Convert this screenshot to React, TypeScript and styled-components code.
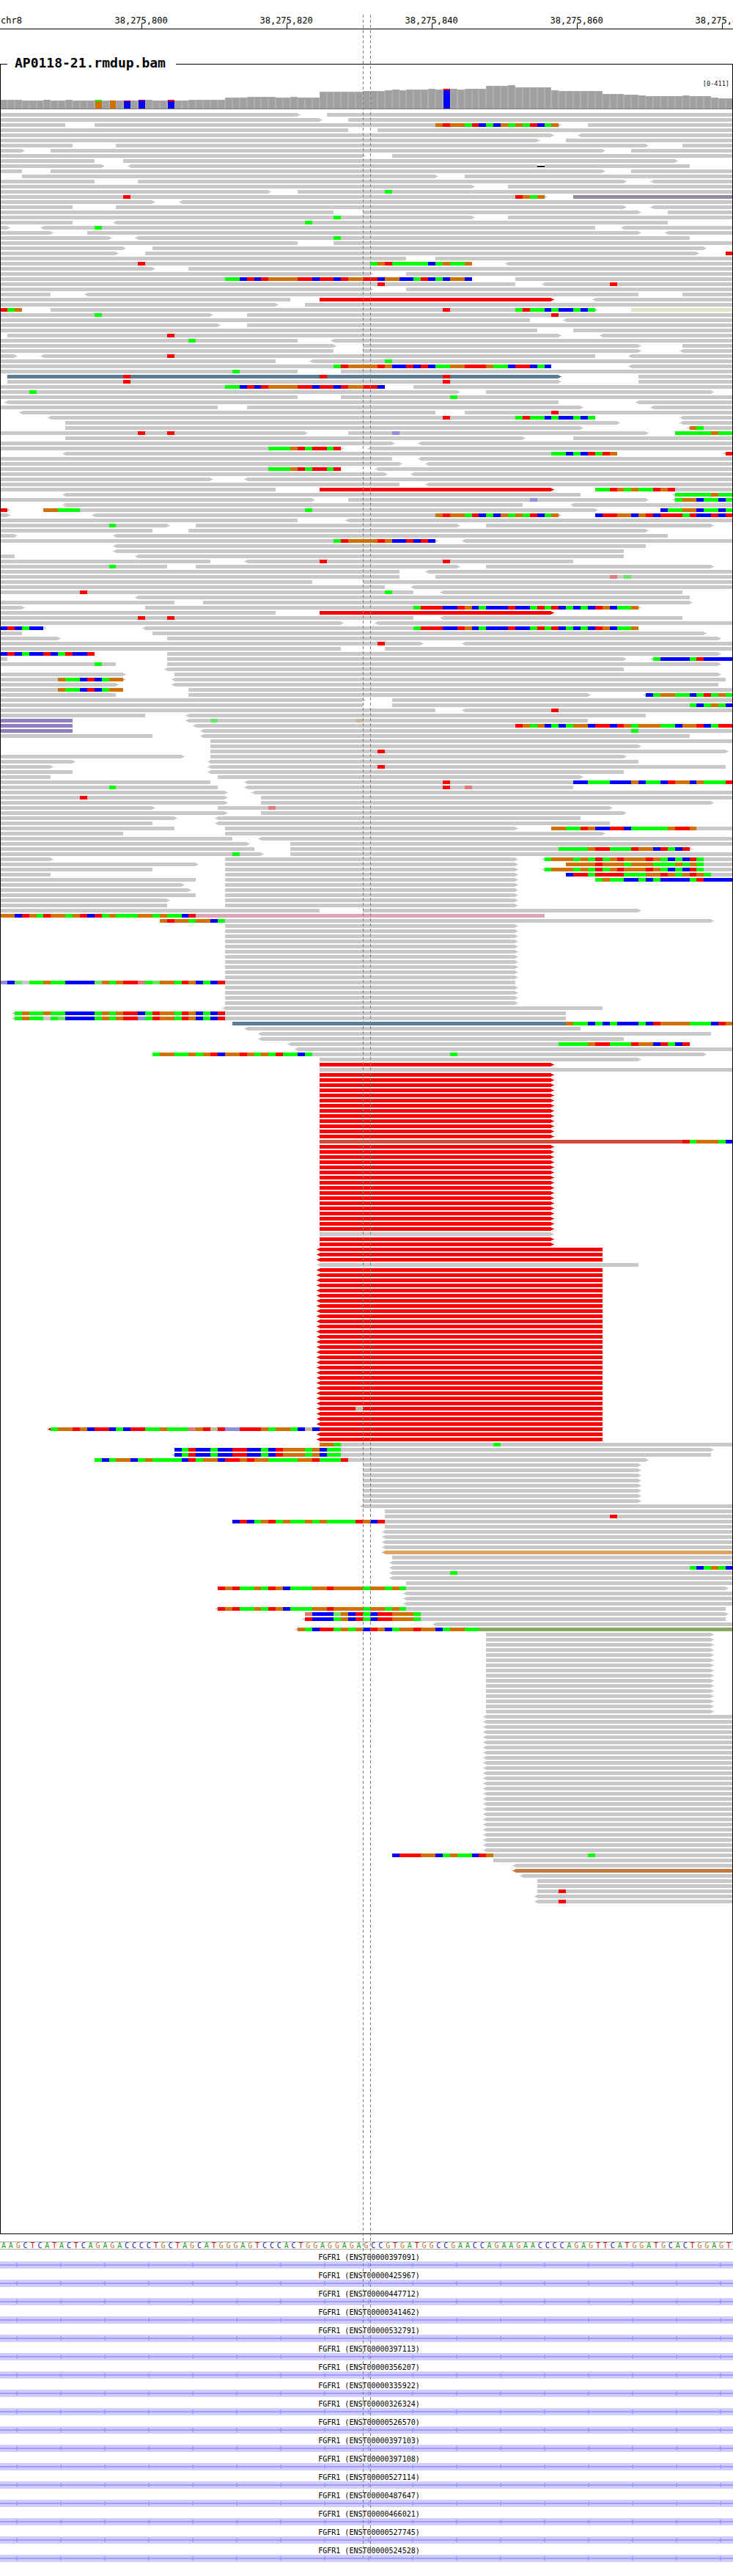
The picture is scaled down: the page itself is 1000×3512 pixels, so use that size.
import React from "react";
import styled, { createGlobalStyle } from "styled-components";

const BASE = 9.9;
const READ_H = 5;
const ROW_PITCH = 7;

const rep = (n: number, s: string) => Array.from({ length: n }, () => s);

const L96 = "@57:ATTTCCTGCACCCTCCATATCACACTGCAAG";
const L106 = "@90:ACCCCATCCCC";
const LA = "@75:AGGGAGATAGTGGGTGACACTA";
const LR = "@30:TGTAAGATGCAAAGGTGGGGAGGAGA";

const ROWS: string[] = [
  "0-41> 45-101",
  "0-44> 48-101",
  "0-9 13-77> @60:GTGGATCACGAGATCAG 81-101",
  "0-48 52-101",
  "0-76> <80-101",
  "0-74> 78-101",
  "0-10 16-89> 94-101",
  "0-3> 7-83> 87-101",
  "0-50> 54-101",
  "0-13 17-93>",
  "0-14> <18-74 #74 75-95",
  "0-3 7-83> 87-101",
  "3-60> 64-101",
  "0-13 19-86> <90-101",
  "0-65> 70-101",
  "0-37> 41-101 @53:A",
  "0-75> @17:T @71:TGAG 79-101m",
  "0-21> <25-101",
  "0-10 16-86> <90-101",
  "0-46 50-88> 92-101",
  "0-65> @46:A 70-101",
  // 21
  "0-10 <16-92 @42:A",
  "0-1> <6-82 @13:A <86-101",
  "0-7> 12-88> <92-101",
  "0-15> <19-95 @46:A",
  "0-41 46-101",
  "0-17> 21-97>",
  "0-16> 20-96> 100-101 @100:T",
  "0-56 60-101",
  "0-65 @19:T @51:AGTAAAAACAGAAG <70-101",
  "0-21> 26-101",
  "0-51> 56-101",
  "0-65 @31:AACTCTGGGGTTCTTCTGGTTCGGCCATCACGGC 71-101",
  "0-71 @52:T <75-101 @84:T",
  "0-51> 56-101",
  "0-7 <12-88 94-101",
  "0-40 44-76>r <82-101",
  "0-38> 42-101",
  "0-3 @0:TAG 7-82> @61:T @71:ATAACACCACA 87-101y",
  "0-29> @13:A 34-101 @76:T",
  "0-73 <78-101",
  "0-30> 34-101",
  "0-74 79-101",
  "1-77> @23:T <83-101",
  "0-41 @26:A <46-101",
  "0-46> 50-88> 94-101",
  "0-46 50-88> <94-101",
  "0-2> <6-82 @23:T <87-101",
  "0-38 <43-101 @53:A",
  "0-76 @46:ATGGGGTGCCTCTCAAGGTTTGAACTTCAC <87-101",
  "0-41 @32:A 47-101",
  "1-77>s @17:T @44:T @61:T 88-101",
  "1-77> @17:T @61:T 88-101",
  "0-53 @31:AACTCTGGGGTTCTTCTGGTTC 57-101",
  "0-63> @4:A 67-98>",
  "0-41 47-101 @62:A",
  "<1-77 <88-101",
  "0-30 34-80> <90-101",
  "<3-60 64-101 @76:T",
  "<7-82 @61:T @71:ATAACACCACA <94-101",
  "9-85> <94-101",
  "9-80> <95-101 @95:GA",
  "0-42> @19:T @23:T 48-89> @54:c 93-101 @93:AAAAAGAA",
  "9-72> 79-101",
  "0-54> <58-101",
  "0-47> @37:AAAGTATTAT <51-101",
  "<9-85 @76:AACACTATG <100-101 @100:T",
  "0-54 <58-101",
  "0-55> <59-101",
  "0-47 @37:AAAGTATTAT <52-101",
  "0-53> <57-101",
  "0-29> <34-101",
  "0-55 <59-101",
  "0-38 44-76>r 82-101 @82:AATGAGAATGT",
  "<9-80 <93-101 @93:AAAAAGAA",
  "0-43> 48-89> @73:c <93-101 @93:AGGCAACA",
  "<9-72 <79-101",
  "0-1> @0:T 6-82> @6:GGAAA @42:A 91-101 @91:CAAGGCAACA",
  "0-1> <13-77> @60:GTGGATCACGAGATCAG 82-101 @82:CTTGGCGTCTTTATCCTCT",
  "0-41 <48-101",
  "0-23> @15:A 27-63> 67-98>",
  "0-21 26-89>",
  "0-2> <16-92",
  "0-60> @46:ATGGGGTGCCTCTC <64-101",
  "<16-89",
  // 85
  "<16-86",
  "0-2 <19-86",
  "0-29 <34-79 @44:T @61:T",
  "0-23 @15:A 27-63> 67-98>",
  "0-55 <59-101",
  "0-55 60-101 @84:t @86:a",
  "0-43 50-101",
  "0-53 <57-101",
  "0-57 @11:T @53:A <61-94",
  "<19-95",
  "0-24 28-95>",
  `0-3> 20-88> ${L96}`,
  "0-38 44-76>r",
  "0-57 @19:T @23:T <61-94",
  "0-47> <52-101",
  `0-6> @0:CTCACC <20-88 ${L96}`,
  "0-3 21-97>",
  "0-8> 23-99>",
  "0-58> @52:T <64-101",
  "0-47 53-101",
  "0-13 @0:CTCACCTCATCCT 23-99>",
  `0-1 23-86> <90-101 ${L106}`,
  "0-16 @13:A 23-99>",
  "<23-86",
  "0-17> 24-99>",
  "0-17> @8:GAACTCAGG <24-100",
  "0-16> <24-99",
  "0-17 @8:GAACTCAGG 26-101",
  "0-16 26-81> <89-101 @89:CAGGAACATAGA",
  "0-50> 54-101",
  "0-50 54-101 @95:ACAGAC",
  "0-60 <64-101 @76:T",
  "0-20 <26-89",
  "0-10v <26-81 @29:a @49:n",
  "0-10v <27-101 @71:TGAGCACAGGCTTCTGAGGGAACGGTCATT",
  "0-10v <28-101 @87:A",
  "0-21 <28-95",
  "29-101",
  "29-88>",
  "29-100> @52:T",
  "0-25> 29-86>",
  "0-10> <29-88",
  "0-7> <29-100 @52:T",
  "0-10 <29-86",
  "0-7 30-80>",
  "0-29 <34-79 @61:T 79-101 @79:CCAAACCCGCAACTGGCGAAAT",
  "0-30 @15:A <34-79 @61:T @64:t",
  "0-31> <35-101",
  "0-31> @11:T 36-101",
  "0-31> 36-98>",
  "0-21> 30-84> @37:t",
  "0-31> 36-86>",
  "0-24> <30-80",
  "0-21 <30-84",
  "0-24 31-71> 76-101 @76:GGAATGCCTTCAAAAAGTTG",
  "0-17 31-83>",
  "0-32 <36-101",
  "0-34> 40-101",
  "0-35 40-95> @77:AAAAGTTAAATGGCTACT",
  "0-36> @32:A 40-101",
  `0-7> 31-71> <75-101 ${LA}`,
  "0-27> 31-71> 78-101 @78:GGGGTGGGAGGGAAAGAGA",
  `0-21 31-71> <75-101 ${LA}`,
  "0-7 31-71> 78-101 @78:CTTATTTTAAAGGTGAGTGA",
  "0-27 31-71> 82-101 @82:AGAACCACACCCCATCCCC",
  "0-25> 31-71>",
  "0-26> 31-71>",
  "0-27 31-71>",
  "0-23> 31-71>",
  "0-23 31-71>",
  "0-44 50-88>",
  "0-75p @0:GGCTGATGGAGTCTAGAAAGGAGAACT",
  "22-98> @22:GTGGAGGCA",
  ...rep(11, "31-71>"),
  "0-71 @0:cCa.AAGAACCCCaGAGTTtAaGGATGCACT",
  ...rep(4, "31-71>"),
  "<31-83",
  "<2-78 @2:AGAAGAACCCCAGAGTTCATGGATGCACT",
  "<2-78 @2:AGAA.AaCCCCAGAGTTcATGGATGCACT",
  "32-78s 78-101 @78:GAACACACCCACTGGGGAAACTG",
  "<34-80",
  "<36-98",
  "<36-86",
  "<40-95 @77:AAAAGTTAAATGGCTACT",
  "<41-101",
  "21-97> @21:AGGAAGAGTCGGTGAGATAACA @62:A",
  "44-88>",
  "44-76>r",
  "44-101",
  ...rep(13, "44-76>r"),
  "44-94u @94:TAGGGAC",
  ...rep(17, "44-76>r"),
  "44-76>",
  ...rep(2, "44-76>r"),
  ...rep(3, "<44-83r"),
  "<44-88",
  ...rep(27, "<44-83r"),
  "<44-83r @49:n",
  ...rep(3, "<44-83r"),
  "<7-83r @7:AGGTGCTTCACTTAAGAAAtGTnTccTTTGAGGACnC",
  ...rep(2, "<44-83r"),
  "44-101 @44:GGA @68:A",
  "24-98> @24:CATCCACCTTCCACTGGGAGCAA",
  "<24-98 @24:CATCCACCTTCCACTGGGAGCAA",
  "13-89> @13:ACAGGCAGAAAACTAGGCTTGTGGAAAAGGTAAAT",
  ...rep(8, "50-88>"),
  "<50-101",
  "53-101",
  "53-101 @84:T",
  "32-101 @32:CTCAGTAGAAGAGAAAATGCT",
  "53-101",
  ...rep(4, "<53-101"),
  "<53-101o",
  "54-101",
  "<54-101",
  "<54-101 @95:ACAGAC",
  "<54-101 @62:A",
  "<54-101",
  "56-101",
  `30-100> ${LR}`,
  ...rep(3, "<56-101"),
  `<30-100 ${LR}`,
  "42-100> @42:tCCCaGCTACTTGGGA",
  "<42-100 @42:TCCCAGCTACTTGGGA",
  "<60-101",
  "<41-66 66-101k @41:GACTTAGAGCTGCAGGTGGCAGGAA",
  ...rep(16, "67-98>"),
  ...rep(27, "<67-101"),
  "54-101 @54:CTTTGGCAGAACTG @81:A",
  "68-101",
  "<71-101",
  "<71-101b",
  "<72-101",
  "74-101",
  "74-101",
  "74-101 @77:T",
  "<74-101",
  "<74-101 @77:T",
];

const READ_FILL: Record<string, string> = {
  "": "#c8c8c8",
  r: "#ff0000",
  s: "#5a7d96",
  p: "#dca4b8",
  v: "#8f7fbf",
  y: "#dfe6c8",
  m: "#938a9e",
  u: "#d34c37",
  o: "#dda464",
  k: "#86a85c",
  b: "#c37a42",
};

const BASE_FILL: Record<string, string> = {
  A: "#00ff00",
  C: "#0000ff",
  G: "#d17105",
  T: "#ff0000",
  a: "#66e466",
  c: "#8f8fdc",
  t: "#e07a7a",
  n: "#c8b8a0",
};

const px = (b: number) => Math.round(b * BASE);

const ReadRow: React.FC<{ spec: string; row: number }> = ({ spec, row }) => {
  const y = row * ROW_PITCH;
  const items: React.ReactNode[] = [];
  spec.split(" ").forEach((tok, i) => {
    if (tok.startsWith("@")) {
      const [start, letters] = tok.slice(1).split(":");
      [...letters].forEach((ch, j) => {
        if (ch === ".") return;
        const b = Number(start) + j;
        items.push(
          <rect key={`${i}-${j}`} x={px(b)} y={y} width={px(b + 1) - px(b)} height={READ_H} fill={BASE_FILL[ch]} />
        );
      });
      return;
    }
    if (tok.startsWith("#")) {
      const b = Number(tok.slice(1));
      items.push(<rect key={i} x={px(b)} y={y + 2} width={px(b + 1) - px(b)} height={2} fill="#000" />);
      return;
    }
    const m = tok.match(/^(<?)(\d+)-(\d+)(>?)([a-z]?)$/);
    if (!m) return;
    const x0 = px(Number(m[2]));
    const x1 = px(Number(m[3]));
    const fill = READ_FILL[m[5]];
    items.push(<rect key={i} x={x0} y={y} width={x1 - x0} height={READ_H} fill={fill} />);
    if (m[1])
      items.push(
        <polygon key={`${i}l`} points={`${x0},${y + 0.5} ${x0 - 2},${y + 1.5} ${x0 - 4},${y + 2.5} ${x0 - 2},${y + 3.5} ${x0},${y + 4.5}`} fill={fill} />
      );
    if (m[4])
      items.push(
        <polygon key={`${i}r`} points={`${x1},${y + 0.5} ${x1 + 2},${y + 1.5} ${x1 + 4},${y + 2.5} ${x1 + 2},${y + 3.5} ${x1},${y + 4.5}`} fill={fill} />
      );
  });
  return <g>{items}</g>;
};

const expand = (spec: [number, number][]) => spec.flatMap(([n, v]) => Array.from({ length: n }, () => v));

const COVERAGE = expand([
  [3, 136], [3, 137], [1, 136], [2, 137], [1, 136], [3, 137], [1, 136], [5, 137], [2, 136], [2, 137], [1, 136], [2, 137],
  [5, 136], [3, 133], [4, 132], [2, 133], [1, 132], [3, 133], [6, 125], [3, 124], [1, 123], [1, 122], [1, 123], [3, 122],
  [1, 121], [1, 122], [2, 121], [1, 122], [3, 121], [3, 117], [1, 116], [5, 119], [1, 123], [6, 124], [3, 128], [2, 129],
  [1, 130], [5, 131], [1, 130], [3, 131], [1, 133], [2, 134],
]);

const COV_SPLIT: Record<number, [string, string, number]> = {
  13: ["#00ff00", "#d17105", 2],
  15: ["#d17105", "#d17105", 0],
  17: ["#ff0000", "#0000ff", 1],
  19: ["#ff0000", "#0000ff", 1],
  23: ["#ff0000", "#0000ff", 2],
  61: ["#ff0000", "#0000ff", 2],
};

const COV_TOP = 88;
const COV_BOTTOM = 148;

const SEQUENCE = "AAGCTCATACTCAGAGACCCCTGCTAGCATGGGAGTCCCACTGGAGGAGAGCCGTGATGGCCGAACCAGAAGAACCCCAGAGTTCATGGATGCACTGGAGT";

const TICKS = [
  { x: 192.6, label: "38,275,800" },
  { x: 390.6, label: "38,275,820" },
  { x: 588.6, label: "38,275,840" },
  { x: 786.6, label: "38,275,860" },
  { x: 984.6, label: "38,275,880" },
];

const TRANSCRIPTS = [
  "397091", "425967", "447712", "341462", "532791", "397113", "356207", "335922", "326324",
  "526570", "397103", "397108", "527114", "487647", "466021", "527745", "524528",
];

const GlobalStyle = createGlobalStyle`
  html, body { margin: 0; padding: 0; background: #fff; }
`;

const Page = styled.div`
  position: relative;
  width: 1000px;
  height: 3512px;
  overflow: hidden;
  background: #fff;
  color: #000;
  font-family: "DejaVu Sans Mono", "Liberation Mono", monospace;
`;

const Ruler = styled.svg`
  display: block;
  width: 1000px;
  height: 40px;
  opacity: 0.999;
`;

const RulerText = styled.text`
  font-family: "DejaVu Sans Mono", "Liberation Mono", monospace;
  font-size: 12px;
  fill: #000;
`;

const Track = styled.section`
  position: relative;
  margin-top: 47px;
  width: 1000px;
  height: 2959px;
  &::after {
    content: "";
    position: absolute;
    inset: 0;
    box-sizing: border-box;
    border: 1px solid #000;
    pointer-events: none;
  }
`;

const TrackTitle = styled.h2`
  position: absolute;
  z-index: 1;
  left: 10px;
  top: -12px;
  margin: 0;
  padding: 0 14px 0 10px;
  background: #fff;
  font-size: 18px;
  line-height: 22px;
  font-weight: 700;
  font-family: "DejaVu Sans Mono", "Liberation Mono", monospace;
  opacity: 0.999;
`;

const CoverageChart = styled.svg`
  display: block;
  width: 1000px;
  height: 67px;
  shape-rendering: crispEdges;
`;

const RangeText = styled.text`
  font-family: "DejaVu Sans Mono", "Liberation Mono", monospace;
  font-size: 8.6px;
  fill: #111;
`;

const ReadsChart = styled.svg`
  display: block;
  width: 1000px;
  height: 2892px;
  shape-rendering: crispEdges;
`;

const SequenceRow = styled.div`
  display: grid;
  grid-template-columns: repeat(101, 9.9px);
  width: 1000px;
  height: 9px;
  margin-top: 10px;
  overflow: hidden;
  border-top: 1px solid #aaa;
  border-bottom: 1px solid #aaa;
  opacity: 0.999;
`;

const BASE_TEXT: Record<string, string> = { A: "#1a9a1a", C: "#2222a8", G: "#b07a34", T: "#c01414" };

const Base = styled.span<{ $b: string }>`
  font-size: 10px;
  line-height: 10px;
  text-align: center;
  color: ${(p) => BASE_TEXT[p.$b]};
`;

const GeneList = styled.div`
  display: flex;
  flex-direction: column;
  margin-top: 1px;
`;

const GeneRow = styled.div`
  display: flex;
  flex-direction: column;
  height: 25px;
`;

const GeneLabel = styled.div`
  height: 15px;
  padding: 4px 0 0 7px;
  box-sizing: border-box;
  font-size: 10px;
  line-height: 11px;
  text-align: center;
  white-space: pre;
  opacity: 0.999;
`;

const GeneBand = styled.svg`
  display: block;
  width: 1000px;
  height: 10px;
  shape-rendering: crispEdges;
`;

const CenterLine = styled.div<{ $x: number }>`
  position: absolute;
  z-index: 2;
  left: ${(p) => p.$x}px;
  top: 20px;
  width: 1px;
  height: 3467px;
  background: repeating-linear-gradient(#808080 0 4px, transparent 4px 7px);
  pointer-events: none;
`;

const ARROWS = Array.from({ length: 17 }, (_, i) => 21 + i * 60);

export default function App() {
  return (
    <Page>
      <GlobalStyle />
      <Ruler viewBox="0 0 1000 40">
        <RulerText x={1} y={32}>chr8</RulerText>
        {TICKS.map((t) => (
          <g key={t.x}>
            <RulerText x={t.x} y={32} textAnchor="middle">{t.label}</RulerText>
            <rect x={Math.round(t.x)} y={32} width={1} height={7} fill="#000" />
          </g>
        ))}
        <rect x={0} y={39} width={1000} height={1} fill="#000" />
      </Ruler>

      <Track>
        <TrackTitle>AP0118-21.rmdup.bam</TrackTitle>
        <CoverageChart viewBox={`0 ${COV_TOP - 1} 1000 67`}>
          {COVERAGE.map((top, i) => {
            const split = COV_SPLIT[i];
            const x = px(i);
            const w = px(i + 1) - x;
            if (split) {
              return (
                <g key={i}>
                  <rect x={x} y={top} width={w} height={COV_BOTTOM - top} fill="#aeaeae" />
                  <rect x={x + 1} y={top} width={w - 1} height={split[2]} fill={split[0]} />
                  <rect x={x + 1} y={top + split[2]} width={w - 1} height={COV_BOTTOM - top - split[2]} fill={split[1]} />
                </g>
              );
            }
            return (
              <g key={i}>
                <rect x={x} y={top} width={w} height={COV_BOTTOM - top} fill="#aeaeae" />
                <rect x={x + 1} y={top + 1} width={w - 2} height={COV_BOTTOM - top - 1} fill="#a0a0a0" />
              </g>
            );
          })}
          <rect x={0} y={COV_BOTTOM} width={1000} height={1} fill="#777" />
          <RangeText x={995} y={117} textAnchor="end">[0-411]</RangeText>
        </CoverageChart>
        <ReadsChart viewBox="0 0 1000 2892">
          {ROWS.map((spec, i) => (
            <ReadRow key={i} spec={spec} row={i} />
          ))}
        </ReadsChart>
      </Track>

      <SequenceRow>
        {[...SEQUENCE].map((b, i) => (
          <Base key={i} $b={b}>{b}</Base>
        ))}
      </SequenceRow>

      <GeneList>
        {TRANSCRIPTS.map((id) => (
          <GeneRow key={id}>
            <GeneLabel>{`FGFR1 (ENST00000${id})`}</GeneLabel>
            <GeneBand viewBox="0 0 1000 10">
              <rect x={0} y={0} width={1000} height={10} fill="#d0ccff" />
              <rect x={0} y={4} width={1000} height={2} fill="#9c9cff" />
              {ARROWS.map((x) => (
                <polygon key={x} points={`${x},5 ${x + 3},1 ${x + 3},9`} fill="#9c9cff" />
              ))}
            </GeneBand>
          </GeneRow>
        ))}
      </GeneList>

      <CenterLine $x={495} />
      <CenterLine $x={505} />
    </Page>
  );
}
